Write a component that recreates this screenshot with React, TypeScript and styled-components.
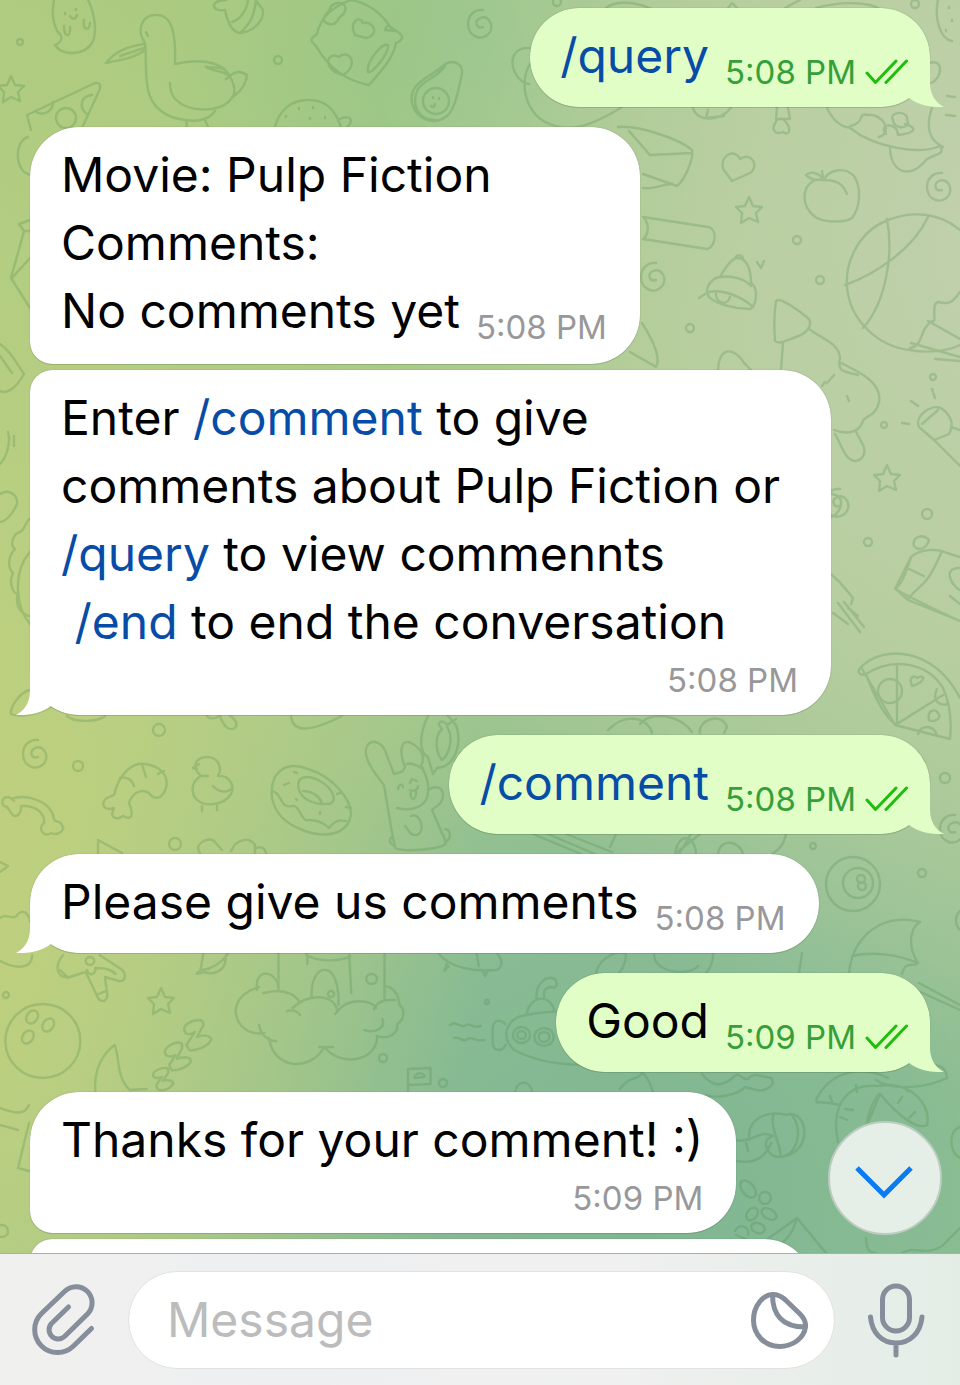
import React from "react";
import styled, { createGlobalStyle, css } from "styled-components";

const GlobalStyle = createGlobalStyle`
  * { box-sizing: border-box; }
  body { margin: 0; }
  body, button, input { font-family: Inter, "Liberation Sans", sans-serif; }
`;

const Screen = styled.main`
  position: relative;
  display: flex;
  flex-direction: column;
  height: 100vh;
  overflow: hidden;
  background:
    radial-gradient(ellipse 56% 68% at -6% 64%, rgba(192, 208, 125, 1) 0%, rgba(190, 208, 126, 0.85) 30%, rgba(180, 205, 130, 0) 100%),
    radial-gradient(ellipse 66% 62% at 105% 17%, rgba(192, 208, 172, 1) 0%, rgba(187, 207, 166, 0.85) 45%, rgba(178, 204, 155, 0) 100%),
    radial-gradient(ellipse 76% 46% at 66% 86%, rgba(126, 181, 146, 1) 0%, rgba(131, 185, 148, 0.85) 40%, rgba(150, 196, 145, 0) 100%),
    radial-gradient(ellipse 34% 30% at 50% 3%, rgba(150, 197, 138, 1) 0%, rgba(154, 199, 138, 0) 100%),
    linear-gradient(#adcb80, #abcb8b 50%, #a2c790);
`;

const Wallpaper = styled.svg`
  position: absolute;
  inset: 0;
  width: 100%;
  height: 100%;
  fill: none;
  stroke: #4f8a4c;
  stroke-width: 2.4;
  stroke-linecap: round;
  stroke-linejoin: round;
  opacity: 0.26;
  path, circle, ellipse { vector-effect: non-scaling-stroke; }
`;

const Messages = styled.section`
  position: relative;
  flex: 1;
  min-height: 0;
  overflow: hidden;
  display: flex;
  flex-direction: column;
  gap: 20px;
  padding: 8px 30px 0;
`;

const Group = styled.div`
  flex-shrink: 0;
  display: flex;
  flex-direction: column;
  align-items: flex-start;
  gap: 6px;
`;

type BubbleProps = {
  $out?: boolean;
  $tall?: boolean;
  $joinTop?: boolean;
  $joinBottom?: boolean;
};

const BubbleBox = styled.article<BubbleProps>`
  position: relative;
  flex-shrink: 0;
  max-width: 89%;
  padding: 14px 33px ${p => (p.$tall ? 19 : 17)}px 31px;
  border-radius: ${p => (p.$joinTop ? 22 : 49)}px 49px 49px ${p => (p.$joinBottom ? 22 : 49)}px;
  background: #fff;
  box-shadow: 0 0 1px rgba(50, 80, 40, 0.6), 0 1px 0 rgba(50, 80, 40, 0.16);
  color: #000;
  ${p => p.$out && css`
    align-self: flex-end;
    padding: 14px 22px 17px 30px;
    background: #e1fec6;
  `}
`;

const TailSvg = styled.svg<{ $out?: boolean }>`
  position: absolute;
  bottom: 0;
  width: 62px;
  height: 48px;
  ${p => (p.$out
    ? css`right: -14px; fill: #e1fec6;`
    : css`left: -14px; fill: #fff; transform: scaleX(-1);`)}
`;

const LastLine = styled.div<{ $stacked?: boolean }>`
  display: flex;
  align-items: flex-end;
  column-gap: 16px;
  ${p => p.$stacked && css`
    flex-direction: column;
    row-gap: 6px;
  `}
`;

const Body = styled.p`
  position: relative;
  align-self: flex-start;
  margin: 0;
  font-size: 48px;
  line-height: 68px;
  white-space: pre-wrap;
`;

const Command = styled.a`
  color: #074ca6;
  text-decoration: none;
`;

const Meta = styled.div<{ $out?: boolean }>`
  position: relative;
  display: flex;
  align-items: center;
  gap: 9px;
  font-size: 33px;
  line-height: 36px;
  white-space: nowrap;
  color: ${p => (p.$out ? "#369f39" : "#98989a")};
  svg {
    fill: none;
    stroke: #1fbd0c;
    stroke-width: 3;
    stroke-linecap: round;
    stroke-linejoin: round;
  }
`;

const NextBubble = styled(BubbleBox)`
  width: 87%;
  height: 141px;
`;

const ScrollDown = styled.button`
  position: absolute;
  right: 18px;
  bottom: 18px;
  display: grid;
  place-items: center;
  width: 114px;
  height: 114px;
  padding: 8px 2px 0 0;
  border: 2px solid #bccdc0;
  border-radius: 50%;
  background: #e5eee7;
  svg {
    fill: none;
    stroke: #0a7bf2;
    stroke-width: 5;
  }
`;

const Composer = styled.form`
  position: relative;
  display: flex;
  align-items: center;
  gap: 31px;
  padding: 17px 34px 16px 30px;
  border-top: 1px solid #a9afaa;
  background: linear-gradient(90deg, #f0f0ee, #eeeff1 30%, #f0f0f0 62%, #e3ede6);
`;

const IconButton = styled.button`
  display: grid;
  place-items: center;
  flex-shrink: 0;
  padding: 0;
  border: 0;
  background: none;
  svg {
    fill: none;
    stroke: #868e9b;
    stroke-width: 5;
    stroke-linecap: round;
    stroke-linejoin: round;
  }
`;

const Field = styled.div`
  flex: 1;
  min-width: 0;
  display: flex;
  align-items: center;
  height: 98px;
  padding: 0 26px 0 38px;
  border: 1px solid #e0e2e3;
  border-radius: 49px;
  background: #fff;
`;

const MessageInput = styled.input`
  flex: 1;
  min-width: 0;
  height: 68px;
  padding: 0 0 2px;
  border: 0;
  outline: 0;
  background: none;
  color: #000;
  font-size: 48px;
  &::placeholder { color: #bcbcbc; opacity: 1; }
`;

const Tail = ({ out }: { out?: boolean }) => (
  <TailSvg $out={out} viewBox="0 0 62 48" aria-hidden="true">
    <path d="M48 0V24C48 36 54 44 62 48C48 48.500 36 46 27 39L26 37Q44 24 46 0Z" />
  </TailSvg>
);

const Ticks = () => (
  <svg width="43" height="26" viewBox="0 0 43 26" role="img" aria-label="Read">
    <path d="M2 14L10.500 23.500L31 2M21 23.500L41.500 2" />
  </svg>
);

type MessageProps = {
  time: string;
  lead?: React.ReactNode;
  out?: boolean;
  tail?: boolean;
  stacked?: boolean;
  joinTop?: boolean;
  joinBottom?: boolean;
  children: React.ReactNode;
};

const Message = ({ time, lead, out, tail, stacked, joinTop, joinBottom, children }: MessageProps) => (
  <BubbleBox $out={out} $tall={!!lead} $joinTop={joinTop} $joinBottom={joinBottom}>
    {tail && <Tail out={out} />}
    {lead && <Body>{lead}</Body>}
    <LastLine $stacked={stacked}>
      <Body>{children}</Body>
      <Meta $out={out}>
        <time>{time}</time>
        {out && <Ticks />}
      </Meta>
    </LastLine>
  </BubbleBox>
);

const STAR = "M0-13L4-4 13-3 7 3 9 12 0 8-8 13-7 3-13-3-4-4Z";
const SPIRAL = "M2 3C-5 5-7-3-1-6C7-9 13 0 9 8C3 18-13 14-13 0C-13-9-6-15 2-14";

const stars: [number, number][] = [[11, 89], [749, 210], [887, 478], [161, 1001]];
const spirals: [number, number][] = [[36, 754], [940, 187], [654, 277], [481, 24], [953, 829], [838, 503]];
const dots: [number, number, number][] = [
  [20, 42, 3], [278, 60, 4], [797, 240, 4], [820, 280, 4], [690, 328, 4], [933, 377, 3],
  [884, 425, 3], [927, 514, 5], [868, 542, 4], [159, 730, 6], [78, 766, 5], [175, 844, 6],
  [922, 873, 4], [813, 846, 3], [383, 1058, 4], [443, 1083, 4], [487, 1002, 2],
  [6, 995, 3], [915, 4, 4], [945, 778, 5], [557, 2, 4], [2, 1231, 6], [765, 1198, 6],
];

const Doodles = () => (
  <Wallpaper viewBox="0 0 960 1385" preserveAspectRatio="xMidYMin slice" aria-hidden="true">
    {stars.map(([x, y]) => <path key={`${x}-${y}`} d={STAR} transform={`translate(${x} ${y})`} />)}
    {spirals.map(([x, y]) => <path key={`${x}-${y}`} d={SPIRAL} transform={`translate(${x} ${y})`} />)}
    {dots.map(([x, y, r]) => <circle key={`${x}-${y}`} cx={x} cy={y} r={r} />)}
    {/* ghost */}
    <path d="M54 0C52 12 52 20 57 31C64 37 62 42 55 45C62 56 84 56 92 43C98 32 94 12 88 0M65 13v1M76 9v1M70 16C72 20 76 19 77 15M64 26C64 38 71 38 70 27M84 20C82 30 90 32 90 23" />
    {/* cheese */}
    <path d="M31 130L27 115 95 83C101 82 101 87 99 91L82 128M35 111C42 117 53 112 53 102M92 95C81 96 78 107 87 114" />
    <circle cx="66" cy="118" r="10" />
    <path d="M28 137C14 141 14 171 30 175M30 220L19 224 24 231H30M24 231L11 278 30 308M12 278L30 258" />
    {/* bird */}
    <path d="M145 43C136 30 142 16 154 15C172 13 176 32 175 64C195 59 221 60 229 75C235 85 236 94 231 99C222 112 190 114 175 99C171 94 170 89 170 83M145 43C147 58 144 76 149 94C155 112 172 118 180 119C192 122 208 122 215 111M206 67C214 72 222 70 229 76C226 66 217 68 206 67M226 79C235 71 239 70 247 75C246 86 240 92 233 97M144 44C130 46 115 51 106 63C119 60 135 58 145 50M120 56L144 48M186 120L187 127M205 120L208 127M146 32L148 36" />
    {/* acorn */}
    <path d="M226 0C209 0 211 12 225 10C228 24 232 32 240 33C256 32 270 14 259 5L256 0M232 22C240 20 247 10 248 0M241 32C252 22 254 14 256 1" />
    {/* pillow */}
    <path d="M351 0C366 2 382 13 390 27C404 35 406 38 396 43C393 59 381 71 369 85C347 81 329 69 316 46C308 39 312 38 317 34C320 18 333 6 351 0M325 22C320 16 330 14 331 6C338 0 348 4 345 11C343 17 339 15 338 20C334 26 329 25 325 22M355 35C349 23 359 14 363 23C374 21 380 35 366 38ZM343 75C320 69 328 50 339 57C349 48 360 65 343 75M368 72C366 62 382 42 388 45C390 51 373 74 368 72M385 30L388 25 396 31Z" />
    {/* hedgehog */}
    <path d="M275 127C279 110 292 100 307 100C325 99 335 109 341 127M340 119C351 114 354 121 347 127M299 108v1M313 107v1M310 118v1M286 116v1M325 117v1" />
    {/* avocado */}
    <path d="M443 66C452 58 463 63 462 74C458 92 455 109 447 116C434 126 416 120 412 103C408 83 430 77 443 66M445 66C438 77 424 80 418 89C410 105 419 120 435 120" />
    <circle cx="436" cy="101" r="13" /><path d="M433 97v1M439 98v1M431 106Q434 109 435 104" />
    {/* lollipop */}
    <path d="M541 50C500 38 510 82 529 84M536 58C519 69 520 108 545 122C572 135 594 124 622 107M606 8C613 2 629 0 650 8M728 8L732 3 737 8M785 8L800 0M816 8C845 0 870 3 880 9" />
    {/* envelope and brush */}
    <path d="M618 127C640 125 681 140 692 150C694 158 685 180 677 186L643 174M629 131L650 155 692 153M643 188C655 190 665 183 673 184M643 217L708 227C718 229 716 247 707 249L643 239M644 218C650 225 648 234 644 239" />
    {/* hearts */}
    <path d="M732 181L723 169C720 153 736 149 740 159C751 151 760 166 750 173ZM693 108C697 122 719 122 731 108M708 110L706 118 724 116M777 108L776 119 790 119 788 108M777 120C770 130 775 135 783 132C790 137 792 128 784 120" />
    {/* octopus */}
    <path d="M827 108C834 123 846 130 851 126C866 122 857 112 868 115C882 113 894 132 879 137M850 128C875 148 920 155 940 146C946 155 935 153 926 160C911 179 891 174 890 148M886 134C877 124 898 121 898 135C916 133 918 128 905 124M893 120C888 111 909 110 907 120C913 128 894 131 893 120M932 108C925 128 930 141 943 147M947 96L955 97M946 115L955 116M929 63C944 58 943 78 931 83M938 0C934 18 940 39 952 41M949 7v1M952 20v1M946 30v1" />
    {/* peach */}
    <path d="M824 180C828 170 844 166 854 176C862 188 860 208 852 218C845 223 822 223 814 216C801 205 802 188 813 181C818 178 824 181 824 180C837 180 843 184 847 194M823 179C818 172 810 171 806 175C812 181 818 180 823 179M823 179L822 171" />
    {/* basketball */}
    <path d="M960 230C938 211 909 212 891 219C858 230 845 263 847 287C850 322 880 347 910 350C930 354 950 350 960 345M887 219C893 250 888 300 863 328M928 217C913 249 876 274 845 285M910 348C925 345 918 330 932 321C938 325 930 304 938 302C952 306 955 298 960 292M911 343L960 357M928 321L960 339" />
    {/* bell */}
    <path d="M720 277C725 268 731 259 737 258C749 258 751 274 751 283C760 289 755 309 750 309C735 309 716 304 709 297C703 288 712 278 720 277C732 275 745 279 751 286M709 292C722 289 741 296 753 307M716 294C716 304 728 306 730 297M735 258C738 253 743 256 743 259M757 262L761 268 764 261M699 298L705 294" />
    {/* wizard hat */}
    <path d="M776 301C780 296 802 313 809 319C813 327 805 334 796 337C787 340 779 345 775 341C774 328 774 313 776 301M783 343L781 370M809 329C822 339 839 343 840 358C836 374 849 372 858 375M718 370C719 348 732 345 745 364L751 370M642 323C656 345 660 360 656 367L630 352M827 383L834 375M822 386L825 382M839 362C862 373 882 383 879 402C876 417 864 416 863 421C858 436 842 433 834 430M835 434C842 446 845 460 855 461C864 460 867 451 862 443L855 430M847 396L849 401M832 494C846 496 842 511 832 517" />
    {/* telescope */}
    <path d="M934 440L919 427C914 417 930 404 941 408C950 414 955 424 949 434ZM934 440L960 466M951 427L960 430M922 424L938 410M911 401L918 406M932 389L935 398M902 423L909 424M960 361L935 359" />
    {/* gift */}
    <path d="M911 557C901 591 895 587 895 589C915 600 940 612 960 621M895 588L908 600 960 621M896 587L911 557C920 549 936 548 947 553L960 557M909 598C920 583 926 589 941 553M909 569L924 576M914 546C912 537 922 533 929 540C927 548 919 552 914 546M960 568C940 568 954 588 960 590M950 596L960 604M832 575C843 584 846 590 853 598L851 604M838 603L860 632M844 602L864 627M833 613L848 624M848 608L858 616" />
    {/* pizza slice */}
    <path d="M861 667C884 644 935 648 960 698M861 667C855 673 862 676 866 674C893 657 927 662 943 688C950 703 952 718 950 739L895 725ZM897 664V724L943 695M866 674C875 699 885 716 895 724" />
    <circle cx="890" cy="691" r="12" /><path d="M912 686C908 675 915 676 917 678C926 673 926 682 912 686M937 689C931 702 941 706 947 704M929 720C927 710 935 708 938 713C943 718 934 723 929 720M918 734C920 725 933 724 937 735" />
    {/* shapes along the left edge */}
    <path d="M0 344C12 352 18 366 24 374C15 390 6 394 0 391M0 356L12 373M8 432C11 444 6 458 0 464M9 436V440M14 436V446M0 494C10 488 18 496 17 504C12 516 4 522 0 522M30 518C24 524 25 530 20 532C12 534 10 546 15 549C7 558 8 568 13 573C8 584 14 594 18 594C14 606 22 614 29 616M30 552C12 572 16 608 30 624M29 690C18 694 10 708 11 714C20 718 40 714 52 706M0 862L8 866 0 872M0 918C6 912 14 922 18 914C24 908 30 916 30 922" />
    {/* bone, shrimp, chick */}
    <path d="M14 801C6 792 -1 801 4 806C11 806 9 817 16 816C22 814 21 807 21 806C38 805 45 815 44 823C36 830 46 838 51 833C60 837 66 827 62 826C62 820 54 823 54 819C51 800 27 795 14 798" />
    <path d="M114 795C119 773 133 762 145 764C161 766 169 776 166 788C162 800 154 800 149 793C139 787 131 796 129 803C134 815 132 821 123 816C116 821 109 817 114 808C102 812 101 801 107 798ZM120 778C130 776 133 783 134 786M142 764L146 777M158 774L164 771" />
    <path d="M201 776C191 767 195 757 208 757C220 758 222 770 218 776C230 775 235 786 231 794C224 805 205 808 196 799C190 791 192 781 201 776H208M213 786C219 793 228 793 232 788M197 769L193 768 199 764M202 806V811M217 806V810" />
    {/* donut */}
    <path d="M272 798C269 770 288 761 308 769C334 777 351 800 351 814C348 835 326 838 305 831C283 823 275 812 272 798M299 790C295 776 307 774 320 781C334 789 339 804 327 804C317 805 303 801 299 790M303 791C312 791 319 796 322 803M272 791C283 793 279 809 292 806C300 804 301 823 309 820C319 820 325 824 329 828C338 817 342 821 346 821M284 785L289 783M294 772L297 773M296 799L297 800M337 794L340 793M320 812V814M346 807L351 808" />
    {/* rabbit */}
    <path d="M394 774C405 771 402 772 405 767C398 750 402 738 411 743C423 749 425 758 421 766C426 774 429 784 428 790C435 785 443 787 443 795C443 805 434 807 432 810L446 842C448 850 395 853 395 847C394 840 392 835 391 827L384 785C376 775 364 760 366 749C369 737 382 741 386 753ZM407 764C416 762 422 770 423 768M397 808C413 812 429 806 428 790M398 789C399 783 403 784 403 787M410 783L412 779 417 781M410 790C415 792 418 789 418 786M411 792C409 801 417 802 416 791M411 816C420 812 425 829 419 834C410 839 407 826 405 826M392 837C387 841 392 845 395 846M445 829C452 830 451 840 445 842" />
    <path d="M428 716C418 737 420 753 428 757L433 774 437 768C454 767 463 745 456 725L448 716M442 729C433 737 437 755 442 760C451 753 453 735 447 727M442 729C435 723 442 718 447 725L456 719M207 716C210 720 216 718 220 716C224 728 230 731 235 728C239 723 233 717 230 716M291 716C293 735 314 730 342 716M67 716C75 723 98 722 105 716M640 724C650 712 678 713 692 732M608 730C628 710 649 720 652 733M700 733C697 722 720 710 727 727L724 733" />
    <path d="M98 853V840L122 853M200 853C193 844 207 838 213 840L222 850M231 851C237 838 250 837 255 845V853M256 848C263 846 265 849 266 853" />
    <path d="M533 834L581 854M548 834L595 854M566 834L612 852M616 834L610 847M675 854C678 832 695 834 696 854M691 834L679 854M700 834L676 853M718 854C720 837 740 841 743 854M772 854C782 848 784 842 786 834M802 953L799 973" />
    {/* eight ball and umbrella */}
    <circle cx="853" cy="884" r="27" /><circle cx="858" cy="883" r="15" />
    <circle cx="861" cy="879" r="4" /><circle cx="862" cy="886" r="4" />
    <path d="M849 973C853 936 882 912 920 922C910 928 907 946 918 963C914 968 906 959 902 974M852 956C874 951 899 955 918 963M919 983L960 1005M914 989L960 1010M960 911C954 917 955 925 960 930" />
    <g transform="scale(1.071 1)">
      {/* starfish, castle and cloud */}
      <path d="M59 955C50 966 53 979 65 977L80 972 92 999C97 1004 101 999 100 993L98 977 111 981C117 982 119 974 113 969L93 955M81 970C84 978 90 973 89 968C100 968 104 970 108 974M90 995L99 991M56 970L64 978" />
      <circle cx="84" cy="961" r="4" />
      <path d="M190 953L187 971C181 974 184 975 190 972C202 976 208 969 210 964L211 955M189 970C199 969 207 962 213 954M0 961C14 969 30 970 30 955" />
      <path d="M247 1033C229 1036 220 1022 220 1010C221 998 231 990 242 987M240 990C237 965 261 971 260 991M246 993C260 989 273 991 280 1002M268 1011C274 1009 279 1012 280 1015M273 1008C288 993 313 993 315 1012M313 1014C325 995 349 1001 351 1008M349 1009C354 998 365 1000 369 1000M242 1025C243 1034 250 1041 258 1041M340 1030C352 1034 360 1027 357 1019M352 1036C353 1061 318 1068 303 1047C290 1071 256 1071 251 1038M352 1036C362 1040 372 1034 371 1024C377 1020 379 1010 373 1005C372 995 368 987 359 986M298 1047H311M260 953V991M359 953V1000M326 955L328 993M287 953V964M286 955C298 963 320 961 327 956M291 998C290 979 297 969 304 970C311 970 317 984 316 1005" />
      <circle cx="347" cy="979" r="5" /><circle cx="309" cy="994" r="3" />
      {/* bowling ball, moon, sleep letters */}
      <ellipse cx="40" cy="1041" rx="35" ry="37" /><ellipse cx="30" cy="1017" rx="5" ry="7" transform="rotate(30 30 1017)" /><ellipse cx="45" cy="1025" rx="5" ry="7" transform="rotate(30 45 1025)" /><ellipse cx="26" cy="1037" rx="5" ry="7" transform="rotate(30 26 1037)" />
      <path d="M89 1092C87 1067 98 1052 107 1045C112 1057 108 1076 121 1090L137 1089" />
      <path d="M172 1029C172 1023 184 1018 189 1021L190 1025 184 1037C190 1034 198 1036 197 1040C194 1047 182 1051 177 1050L174 1045 182 1032C176 1036 172 1034 172 1029ZM154 1052C154 1046 166 1040 170 1044L170 1048 165 1059C171 1056 180 1057 178 1062C174 1068 165 1071 160 1070L158 1065 164 1055C158 1058 154 1056 154 1052ZM143 1075C143 1070 154 1066 157 1069L157 1073 152 1081C157 1079 164 1081 161 1085C158 1089 151 1092 147 1089L146 1085 151 1077C146 1079 143 1078 143 1075Z" />
      {/* submarine */}
      <path d="M557 1064C530 1066 503 1063 480 1050C468 1038 472 1023 484 1017C500 1012 525 1010 557 1013M472 1024C466 1018 460 1021 460 1029V1043C461 1052 469 1052 472 1045M492 1013C494 998 512 991 518 1011M501 998C500 985 508 978 513 978C521 976 523 990 514 987C507 988 508 993 508 998M449 1026C439 1029 440 1021 434 1026C427 1027 427 1020 420 1025M452 1040C443 1042 440 1035 435 1040C431 1042 429 1036 424 1038M409 953C420 968 442 972 464 970C471 965 468 958 464 953M417 964L415 971 419 966M450 970L453 976 456 970M445 953L447 966M381 1092V1069L402 1068V1084L381 1085M387 1078C388 1070 398 1074 396 1077Z" />
      <circle cx="487" cy="1035" r="8" /><circle cx="487" cy="1035" r="4" /><circle cx="508" cy="1037" r="9" /><circle cx="508" cy="1037" r="5" />
    </g>
    <path d="M515 1092C518 1079 530 1080 532 1092M596 973C600 955 624 948 626 955C626 962 622 970 619 973M654 953C653 974 690 976 698 966M713 953C714 961 709 970 706 973" />
    {/* palm and fruits */}
    <path d="M840 1105C813 1099 816 1106 817 1098C832 1069 865 1066 888 1078M838 1142C830 1103 849 1083 878 1086C909 1080 932 1104 927 1125C918 1130 900 1118 880 1094L865 1130M876 1080C894 1092 929 1087 947 1078C946 1065 937 1065 928 1064M879 1094C870 1105 866 1122 867 1130M856 1085L857 1092M830 1096L832 1102M902 1097L898 1103M915 1112L909 1118M845 1109L853 1110M840 1117L847 1120M905 1087L908 1091" />
    <path d="M749 1140C747 1114 774 1111 786 1115C807 1107 816 1153 780 1157C768 1158 759 1140 773 1136C761 1129 749 1144 736 1140M737 1161C757 1165 767 1154 771 1143M774 1114C768 1125 784 1152 780 1157M792 1115C803 1130 798 1150 785 1156M746 1143L748 1151" />
    <path d="M620 1089C629 1075 638 1081 642 1073C649 1078 650 1084 653 1092M702 1074C714 1089 724 1086 736 1075C741 1073 740 1080 748 1079C754 1072 758 1076 771 1078C777 1084 767 1092 756 1090L745 1087C738 1095 716 1099 706 1095" />
    <ellipse cx="748" cy="1189" rx="6" ry="10" transform="rotate(-40 748 1189)" /><ellipse cx="752" cy="1214" rx="5" ry="7" transform="rotate(40 752 1214)" /><ellipse cx="769" cy="1214" rx="5" ry="8" transform="rotate(-60 769 1214)" /><ellipse cx="758" cy="1228" rx="5" ry="7" transform="rotate(-70 758 1228)" />
    <path d="M735 1231C738 1224 750 1225 748 1235M748 1253L797 1218 826 1253M797 1218C790 1243 780 1240 775 1253M736 1235L748 1240M866 1238C866 1250 870 1253 876 1253M902 1253C915 1245 925 1257 942 1246L960 1228M960 1127C948 1130 949 1153 960 1158M0 1108C12 1112 24 1117 29 1105M29 1123L18 1168 29 1171M0 1125L18 1130" />
  </Wallpaper>
);

export default function App() {
  return (
    <>
      <GlobalStyle />
      <Screen>
        <Doodles />
        <Messages aria-label="Conversation">
          <Message out tail time="5:08 PM"><Command href="#query">/query</Command></Message>
          <Group>
            <Message joinBottom time="5:08 PM" lead={<>Movie: Pulp Fiction<br />Comments:</>}>
              No comments yet
            </Message>
            <Message joinTop tail stacked time="5:08 PM">
              Enter <Command href="#comment">/comment</Command> to give comments about Pulp Fiction or <Command href="#query">/query</Command> to view commennts<br />
              {" "}<Command href="#end">/end</Command> to end the conversation
            </Message>
          </Group>
          <Message out tail time="5:08 PM"><Command href="#comment">/comment</Command></Message>
          <Group>
            <Message tail time="5:08 PM">Please give us comments</Message>
          </Group>
          <Message out tail time="5:09 PM">Good</Message>
          <Group>
            <Message joinBottom stacked time="5:09 PM">Thanks for your comment! :)</Message>
            <NextBubble $joinTop aria-hidden="true" />
          </Group>
          <ScrollDown type="button" aria-label="Scroll to latest message">
            <svg width="60" height="36" viewBox="0 0 60 36"><path d="M3 4L30 31L57 4" /></svg>
          </ScrollDown>
        </Messages>
        <Composer onSubmit={e => e.preventDefault()}>
          <IconButton type="button" aria-label="Attach a file">
            <svg width="67" height="76" viewBox="30 1282 67 76">
              <path d="M91.500 1328.500L73.500 1346A22.500 22.500 0 0 1 41.500 1313.500L64.500 1291.500A16 16 0 0 1 87.500 1314L64.500 1336.500A9.200 9.200 0 0 1 51.500 1323.500L68.500 1307" />
            </svg>
          </IconButton>
          <Field>
            <MessageInput type="text" placeholder="Message" aria-label="Message" />
            <IconButton type="button" aria-label="Stickers">
              <svg width="58" height="60" viewBox="750 1289 58 60">
                <path d="M773 1293.500C778 1293.500 781 1295 785 1298.500L800 1313C804 1317 806 1321 805.500 1326C804 1337 793 1345.500 779.500 1345.500C765 1345.500 753.500 1334 753.500 1319C753.500 1305 763 1293.500 773 1293.500ZM772.500 1294C772.500 1312 781 1326 805 1326" />
              </svg>
            </IconButton>
          </Field>
          <IconButton type="button" aria-label="Record a voice message">
            <svg width="60" height="78" viewBox="866 1281 60 78">
              <rect x="882.500" y="1286" width="27" height="45" rx="13.500" />
              <path d="M870.500 1317C872 1333 882 1343 896 1343S920.500 1333 922 1317M896 1343V1355" />
            </svg>
          </IconButton>
        </Composer>
      </Screen>
    </>
  );
}
